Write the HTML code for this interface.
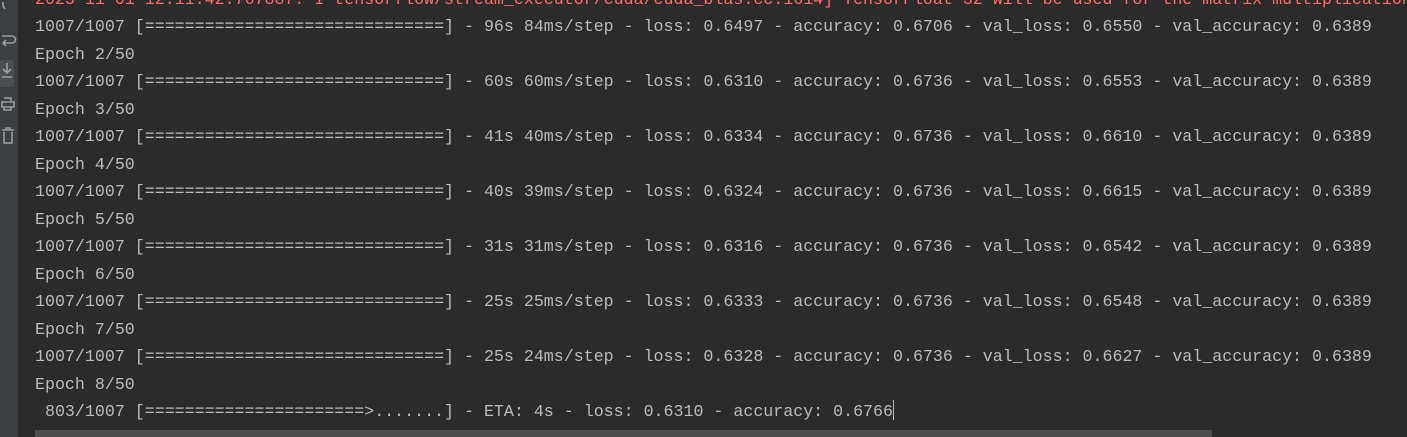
<!DOCTYPE html>
<html><head><style>
html,body{margin:0;padding:0;width:1407px;height:437px;overflow:hidden;background:#2b2b2b}
#g{position:absolute;left:0;top:0;width:18px;height:437px;background:#3c3f41}
#t{position:absolute;left:35px;top:-14.5px;font-family:"Liberation Mono",monospace;font-size:16.64px;line-height:27.5px;color:#bbbbbb;white-space:pre}
.r{color:#ff6b68}
#sb{position:absolute;left:35px;top:430px;width:1177px;height:7px;background:#4e4e4e}
.cur{display:inline-block;width:1px;height:20px;background:#bbb;vertical-align:-4px}
</style></head><body>
<div id="g">
<div style="position:absolute;left:0;top:60px;width:14px;height:27px;background:#4b4e50;border-radius:0 3px 3px 0"></div>
<svg width="18" height="437" style="position:absolute;left:0;top:0" fill="none" stroke="#9a9da0" stroke-width="1.6">
<path d="M3 2v4l2 3"/>
<path d="M2 36h10a3 3 0 0 1 0 7H4M6 40l-3 3 3 3"/>
<path d="M7 63v10M3 69l4 4 4-4M2 77h10"/>
<path d="M4 98h7v3M2 102h12v5H2zM4 107v3h7v-3"/>
<path d="M2 130h12M6 130v-2h4v2M4 132v11h8v-11"/>
</svg>
</div>
<div id="t"><span class="r">2023-11-01 12:11:42.767887: I tensorflow/stream_executor/cuda/cuda_blas.cc:1614] TensorFloat-32 will be used for the matrix multiplication</span>
1007/1007 [==============================] - 96s 84ms/step - loss: 0.6497 - accuracy: 0.6706 - val_loss: 0.6550 - val_accuracy: 0.6389
Epoch 2/50
1007/1007 [==============================] - 60s 60ms/step - loss: 0.6310 - accuracy: 0.6736 - val_loss: 0.6553 - val_accuracy: 0.6389
Epoch 3/50
1007/1007 [==============================] - 41s 40ms/step - loss: 0.6334 - accuracy: 0.6736 - val_loss: 0.6610 - val_accuracy: 0.6389
Epoch 4/50
1007/1007 [==============================] - 40s 39ms/step - loss: 0.6324 - accuracy: 0.6736 - val_loss: 0.6615 - val_accuracy: 0.6389
Epoch 5/50
1007/1007 [==============================] - 31s 31ms/step - loss: 0.6316 - accuracy: 0.6736 - val_loss: 0.6542 - val_accuracy: 0.6389
Epoch 6/50
1007/1007 [==============================] - 25s 25ms/step - loss: 0.6333 - accuracy: 0.6736 - val_loss: 0.6548 - val_accuracy: 0.6389
Epoch 7/50
1007/1007 [==============================] - 25s 24ms/step - loss: 0.6328 - accuracy: 0.6736 - val_loss: 0.6627 - val_accuracy: 0.6389
Epoch 8/50
 803/1007 [======================&gt;.......] - ETA: 4s - loss: 0.6310 - accuracy: 0.6766<span class="cur"></span></div>
<div id="sb"></div>
</body></html>
